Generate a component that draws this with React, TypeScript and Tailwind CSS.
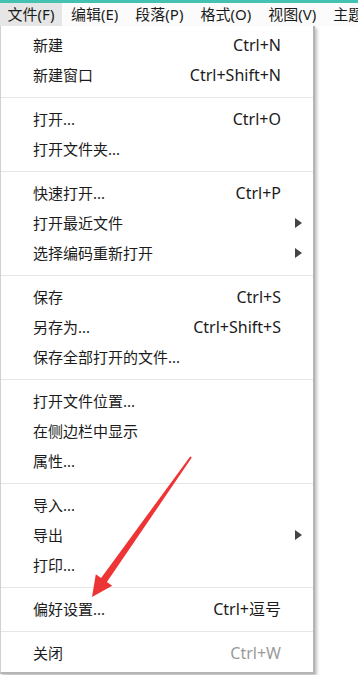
import React from "react";

type Item = { label: string; shortcut?: string; sub?: boolean; dim?: boolean } | "sep";

const items: Item[] = [
  { label: "新建", shortcut: "Ctrl+N" },
  { label: "新建窗口", shortcut: "Ctrl+Shift+N" },
  "sep",
  { label: "打开...", shortcut: "Ctrl+O" },
  { label: "打开文件夹..." },
  "sep",
  { label: "快速打开...", shortcut: "Ctrl+P" },
  { label: "打开最近文件", sub: true },
  { label: "选择编码重新打开", sub: true },
  "sep",
  { label: "保存", shortcut: "Ctrl+S" },
  { label: "另存为...", shortcut: "Ctrl+Shift+S" },
  { label: "保存全部打开的文件..." },
  "sep",
  { label: "打开文件位置..." },
  { label: "在侧边栏中显示" },
  { label: "属性..." },
  "sep",
  { label: "导入..." },
  { label: "导出", sub: true },
  { label: "打印..." },
  "sep",
  { label: "偏好设置...", shortcut: "Ctrl+逗号" },
  "sep",
  { label: "关闭", shortcut: "Ctrl+W", dim: true },
];

const menus = ["文件(F)", "编辑(E)", "段落(P)", "格式(O)", "视图(V)", "主题"];

export default function App() {
  return (
    <div
      className="relative w-[358px] h-[675px] overflow-hidden bg-white text-[#1b1b1b]"
      style={{ fontFamily: '"Noto Sans", "Noto Sans CJK SC", sans-serif' }}
    >
      <div className="h-[3px] bg-[#45c1b2]" />
      <div className="flex h-[23px] items-center bg-[#fbfbfb] text-[15px] leading-none">
        {menus.map((m, i) => (
          <div
            key={m}
            className={
              i === 0
                ? "flex h-full w-[62px] shrink-0 items-center justify-center bg-[#e6e6e6]"
                : "flex h-full shrink-0 items-center pl-[9px] pr-[8px] whitespace-nowrap"
            }
          >
            {m}
          </div>
        ))}
      </div>
      <div className="w-[315px] border-l border-r-2 border-b-2 border-l-[#d0d0d0] border-r-[#b4b4b4] border-b-[#b4b4b4] bg-white pt-[4px] pb-[4px] shadow-[2px_2px_3px_rgba(0,0,0,0.25)]">
        {items.map((it, i) =>
          it === "sep" ? (
            <div key={i} className="flex h-[14px] items-center">
              <div className="h-px w-full bg-[#e6e6e6]" />
            </div>
          ) : (
            <div
              key={i}
              className="relative flex h-[30px] items-center justify-between pl-[32px] pr-[32px] text-[15px] leading-none whitespace-nowrap"
            >
              <span>{it.label}</span>
              {it.shortcut && (
                <span className={it.dim ? "text-[16px] text-[#9a9a9a]" : "text-[16px]"}>
                  {it.shortcut}
                </span>
              )}
              {it.sub && (
                <svg
                  className="absolute right-[11px] top-[10px]"
                  width="7"
                  height="10"
                  viewBox="0 0 7 10"
                >
                  <polygon points="0,0 7,5 0,10" fill="#444" />
                </svg>
              )}
            </div>
          )
        )}
      </div>
      <svg
        className="absolute left-0 top-0 pointer-events-none"
        width="358"
        height="675"
        viewBox="0 0 358 675"
      >
        <polygon
          points="92,597 95.8,574.2 101.1,578 190.2,456.4 191.8,457.6 106.9,582 112.2,585.8"
          fill="#ee3535"
        />
      </svg>
    </div>
  );
}
